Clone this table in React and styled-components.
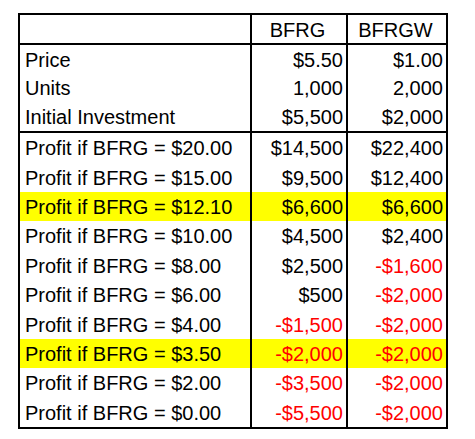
import React from "react";
import styled, { createGlobalStyle } from "styled-components";

const Global = createGlobalStyle`
  html, body { margin: 0; padding: 0; background: #ffffff; }
  body { padding: 13px 0 0 18px; font-family: "Liberation Sans", Arial, sans-serif; }
`;

const Sheet = styled.div`
  width: 430px;
  box-sizing: border-box;
  border: 2px solid #000;
  font-family: "Liberation Sans", Arial, sans-serif;
  font-size: 20px;
  color: #000;
`;

const Block = styled.div`
  display: grid;
  grid-template-rows: repeat(${(p) => p.$rows}, 1fr);
  height: ${(p) => p.$height}px;
  border-bottom: ${(p) => (p.$last ? "none" : "2px solid #000")};
`;

const Row = styled.div`
  display: grid;
  grid-template-columns: 232px 96px 98px;
  background: ${(p) => (p.$highlight ? "#ffff00" : "transparent")};
`;

const Cell = styled.div`
  box-sizing: border-box;
  display: flex;
  align-items: center;
  justify-content: ${(p) => (p.$align === "left" ? "flex-start" : p.$align === "center" ? "center" : "flex-end")};
  padding: ${(p) => (p.$align === "left" ? "1px 0 0 5px" : "1px 3px 0 0")};
  border-right: ${(p) => (p.$edge ? "none" : "2px solid #000")};
  color: ${(p) => (p.$neg ? "#ff0000" : "#000")};
  white-space: nowrap;
  line-height: 1;
`;

const header = ["", "BFRG", "BFRGW"];

const basics = [
  ["Price", "$5.50", "$1.00"],
  ["Units", "1,000", "2,000"],
  ["Initial Investment", "$5,500", "$2,000"],
];

const profits = [
  ["$20.00", "$14,500", "$22,400"],
  ["$15.00", "$9,500", "$12,400"],
  ["$12.10", "$6,600", "$6,600", true],
  ["$10.00", "$4,500", "$2,400"],
  ["$8.00", "$2,500", "-$1,600"],
  ["$6.00", "$500", "-$2,000"],
  ["$4.00", "-$1,500", "-$2,000"],
  ["$3.50", "-$2,000", "-$2,000", true],
  ["$2.00", "-$3,500", "-$2,000"],
  ["$0.00", "-$5,500", "-$2,000"],
];

const neg = (v) => v.startsWith("-");

export default function App() {
  return (
    <>
      <Global />
      <Sheet>
        <Block $rows={1} $height={28}>
          <Row>
            <Cell $align="left">{header[0]}</Cell>
            <Cell $align="center">{header[1]}</Cell>
            <Cell $align="center" $edge>{header[2]}</Cell>
          </Row>
        </Block>
        <Block $rows={3} $height={86}>
          {basics.map(([label, a, b]) => (
            <Row key={label}>
              <Cell $align="left">{label}</Cell>
              <Cell>{a}</Cell>
              <Cell $edge>{b}</Cell>
            </Row>
          ))}
        </Block>
        <Block $rows={10} $height={294} $last>
          {profits.map(([price, a, b, hl]) => (
            <Row key={price} $highlight={hl}>
              <Cell $align="left">{`Profit if BFRG = ${price}`}</Cell>
              <Cell $neg={neg(a)}>{a}</Cell>
              <Cell $neg={neg(b)} $edge>{b}</Cell>
            </Row>
          ))}
        </Block>
      </Sheet>
    </>
  );
}
